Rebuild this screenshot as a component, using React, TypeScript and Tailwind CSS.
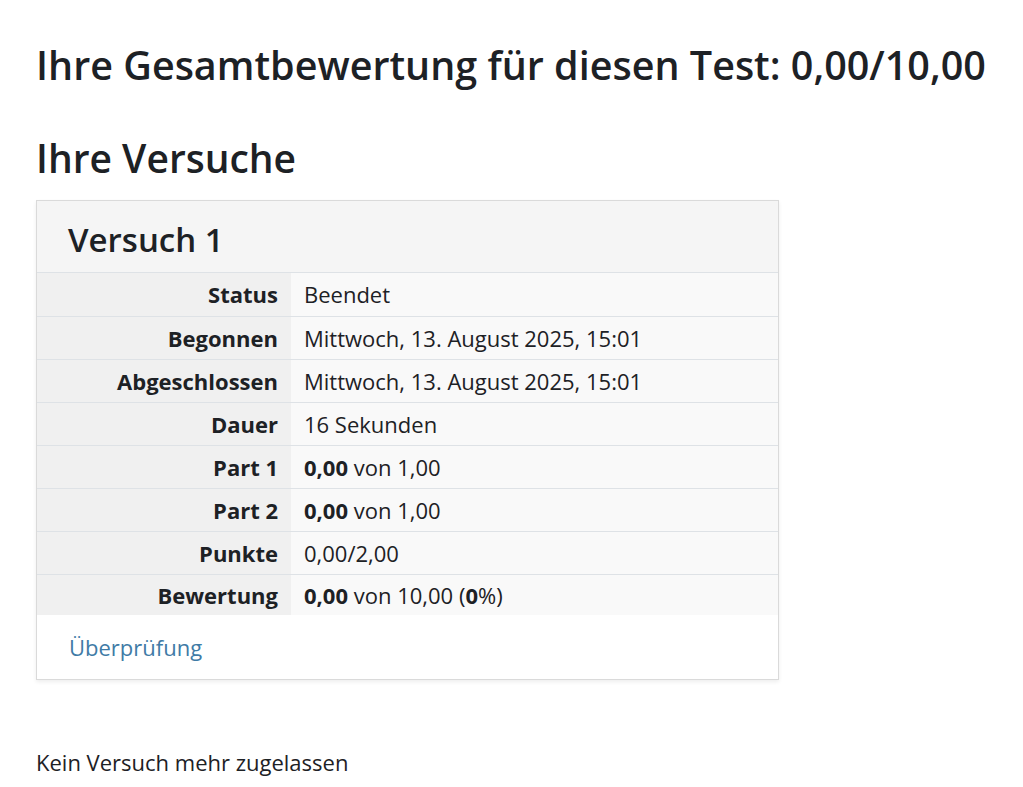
import React from "react";

const rows: { label: string; value: React.ReactNode }[] = [
  { label: "Status", value: "Beendet" },
  { label: "Begonnen", value: "Mittwoch, 13. August 2025, 15:01" },
  { label: "Abgeschlossen", value: "Mittwoch, 13. August 2025, 15:01" },
  { label: "Dauer", value: "16 Sekunden" },
  { label: "Part 1", value: <><b className="font-bold">0,00</b> von 1,00</> },
  { label: "Part 2", value: <><b className="font-bold">0,00</b> von 1,00</> },
  { label: "Punkte", value: "0,00/2,00" },
  {
    label: "Bewertung",
    value: (
      <>
        <b className="font-bold">0,00</b> von 10,00 (<b className="font-bold">0</b>%)
      </>
    ),
  },
];

export default function App() {
  return (
    <div className="min-h-screen bg-white px-[36px] font-['Open_Sans',sans-serif] text-[#1d2125]">
      <h2 className="whitespace-nowrap pt-[42px] text-[39.5px] font-semibold leading-[1.2]">
        Ihre Gesamtbewertung für diesen Test: 0,00/10,00
      </h2>
      <h3 className="mt-[46px] text-[39px] font-semibold leading-[1.2]">Ihre Versuche</h3>

      <div className="mt-[18px] w-[743px] border border-[#dadada] bg-white shadow-[0_2px_4px_rgba(0,0,0,0.07)]">
        <div className="flex h-[72px] items-center border-b border-[#dee2e6] bg-[#f5f5f5] px-[31px] pt-[6px]">
          <h4 className="text-[33px] font-semibold leading-[1.2]">Versuch 1</h4>
        </div>
        <div className="text-[22px] leading-[1.2]">
          {rows.map((r, i) => (
            <div
              key={r.label}
              className={`grid grid-cols-[254px_1fr] ${i === rows.length - 1 ? "h-[41px]" : "h-[43px]"} ${
                i > 0 ? "border-t border-[#dee2e6]" : ""
              }`}
            >
              <div className="flex items-center justify-end bg-[#f0f0f0] pr-[13px] font-bold">{r.label}</div>
              <div className="flex items-center bg-[#f9f9f9] pl-[13px]">
                <span>{r.value}</span>
              </div>
            </div>
          ))}
        </div>
        <div className="flex h-[64px] items-center px-[32px]">
          <a href="#" className="text-[22px] text-[#3f7ba6]">
            Überprüfung
          </a>
        </div>
      </div>

      <p className="mt-[69px] text-[22px] leading-[1.2]">Kein Versuch mehr zugelassen</p>
    </div>
  );
}
